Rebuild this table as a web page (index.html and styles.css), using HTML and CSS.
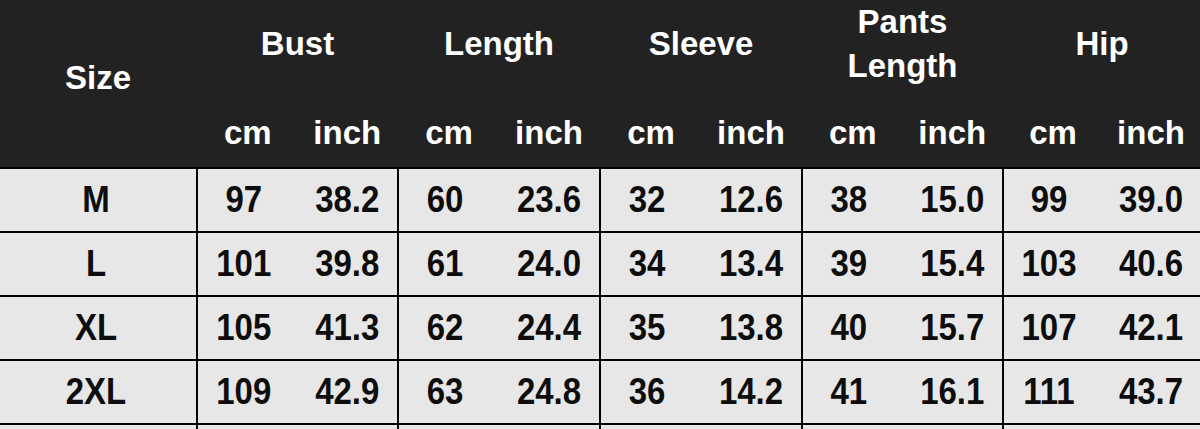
FILE: index.html
```html
<!DOCTYPE html>
<html lang="en">
<head>
<meta charset="utf-8">
<title>Size Chart</title>
<link rel="stylesheet" href="styles.css">
</head>
<body>
<div class="chart">
  <div class="head">
    <div class="h-size">Size</div>
    <div class="h-group"><div class="h-title">Bust</div><div class="h-units"><span>cm</span><span>inch</span></div></div>
    <div class="h-group"><div class="h-title">Length</div><div class="h-units"><span>cm</span><span>inch</span></div></div>
    <div class="h-group"><div class="h-title">Sleeve</div><div class="h-units"><span>cm</span><span>inch</span></div></div>
    <div class="h-group"><div class="h-title">Pants<br>Length</div><div class="h-units"><span>cm</span><span>inch</span></div></div>
    <div class="h-group"><div class="h-title">Hip</div><div class="h-units"><span>cm</span><span>inch</span></div></div>
  </div>
  <div class="row">
    <div class="c-size"><span class="v">M</span></div>
    <div class="grp"><span class="v cm">97</span><span class="v">38.2</span></div>
    <div class="grp"><span class="v cm">60</span><span class="v">23.6</span></div>
    <div class="grp"><span class="v cm">32</span><span class="v">12.6</span></div>
    <div class="grp"><span class="v cm">38</span><span class="v">15.0</span></div>
    <div class="grp"><span class="v cm">99</span><span class="v">39.0</span></div>
  </div>
  <div class="row">
    <div class="c-size"><span class="v">L</span></div>
    <div class="grp"><span class="v cm">101</span><span class="v">39.8</span></div>
    <div class="grp"><span class="v cm">61</span><span class="v">24.0</span></div>
    <div class="grp"><span class="v cm">34</span><span class="v">13.4</span></div>
    <div class="grp"><span class="v cm">39</span><span class="v">15.4</span></div>
    <div class="grp"><span class="v cm">103</span><span class="v">40.6</span></div>
  </div>
  <div class="row">
    <div class="c-size"><span class="v">XL</span></div>
    <div class="grp"><span class="v cm">105</span><span class="v">41.3</span></div>
    <div class="grp"><span class="v cm">62</span><span class="v">24.4</span></div>
    <div class="grp"><span class="v cm">35</span><span class="v">13.8</span></div>
    <div class="grp"><span class="v cm">40</span><span class="v">15.7</span></div>
    <div class="grp"><span class="v cm">107</span><span class="v">42.1</span></div>
  </div>
  <div class="row">
    <div class="c-size"><span class="v">2XL</span></div>
    <div class="grp"><span class="v cm">109</span><span class="v">42.9</span></div>
    <div class="grp"><span class="v cm">63</span><span class="v">24.8</span></div>
    <div class="grp"><span class="v cm">36</span><span class="v">14.2</span></div>
    <div class="grp"><span class="v cm">41</span><span class="v">16.1</span></div>
    <div class="grp"><span class="v cm">111</span><span class="v">43.7</span></div>
  </div>
  <div class="row row-tail">
    <div class="c-size"></div>
    <div class="grp"></div>
    <div class="grp"></div>
    <div class="grp"></div>
    <div class="grp"></div>
    <div class="grp"></div>
  </div>
</div>
</body>
</html>
```

FILE: styles.css
```css
html, body {
  margin: 0;
  padding: 0;
  background: #e7e7e7;
  overflow: hidden;
}

.chart {
  width: 1200px;
  font-family: "Liberation Sans", Arial, sans-serif;
  font-weight: bold;
  font-size: 33px;
}

.head, .row {
  display: grid;
  grid-template-columns: 196px 201px 202px 202px 201px 198px;
}

.head {
  height: 167px;
  background: #222222;
  color: #ffffff;
}

.h-size {
  display: flex;
  align-items: center;
  justify-content: center;
  padding-bottom: 11px;
  box-sizing: border-box;
}

.h-group {
  display: grid;
  grid-template-rows: 88px 1fr;
  border-left: 2px solid transparent;
}

.h-title {
  display: flex;
  align-items: center;
  justify-content: center;
  text-align: center;
  line-height: 44px;
}

.h-units {
  display: grid;
  grid-template-columns: 1fr 1fr;
  align-items: center;
  justify-items: center;
  padding-top: 11px;
}

.row {
  height: 64px;
  box-sizing: border-box;
  border-top: 2px solid #000000;
  background: #e7e7e7;
  color: #0d0d0d;
}

.row-tail {
  height: 10px;
}

.c-size {
  display: flex;
  align-items: center;
  justify-content: center;
  padding-right: 4px;
}

.grp {
  display: grid;
  grid-template-columns: 1fr 1fr;
  align-items: center;
  justify-items: center;
  border-left: 2px solid #000000;
}

.v {
  display: inline-block;
  transform: scaleY(1.1);
}

.grp .cm {
  margin-right: 8px;
}
```
